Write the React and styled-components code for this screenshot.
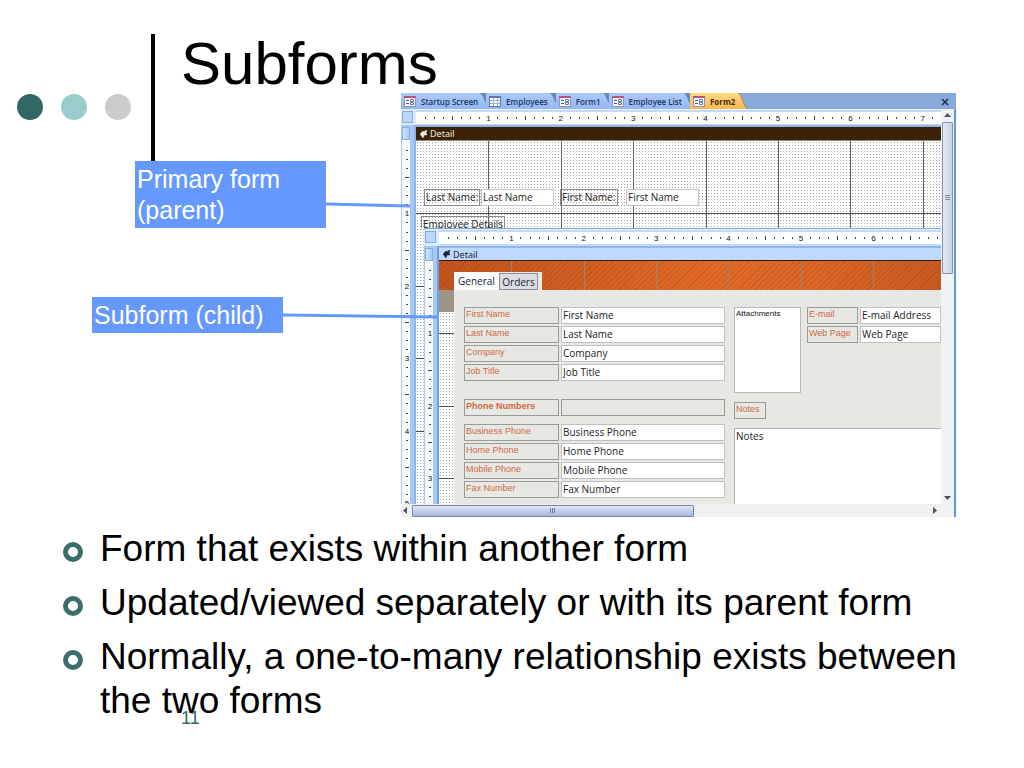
import React, { useId, useState } from "react";
import styled, { createGlobalStyle } from "styled-components";

const INCH = 72.4;

const GlobalStyle = createGlobalStyle`
  *,
  *::before {
    box-sizing: border-box;
  }

  body {
    margin: 0;
    background: #ffffff;
    color: #000000;
    font-family: "Liberation Sans", Arial, sans-serif;
  }
`;

// Slide
const Slide = styled.main`
  min-height: 100vh;
  overflow: hidden;
`;

const Stage = styled.section`
  display: grid;
  grid-template-columns: 151px 4px 246px minmax(0, 1fr);
  grid-template-rows: 59px 68px auto;
  padding: 34px 68px 0 0;
`;

const Dots = styled.div`
  grid-column: 1;
  grid-row: 1 / 3;
  display: flex;
  gap: 18px;
  padding: 60px 0 0 17px;
`;

const Dot = styled.span`
  width: 26px;
  height: 26px;
  border-radius: 50%;
  background: ${({ $color }) => $color};
`;

const Rule = styled.div`
  grid-column: 2;
  grid-row: 1 / 3;
  background: #000000;
`;

const Title = styled.h1`
  grid-column: 3 / 5;
  grid-row: 1;
  margin: 0;
  padding-left: 26px;
  font-size: 60px;
  font-weight: 400;
  line-height: 60px;
`;

const Callouts = styled.div`
  grid-column: 1 / 4;
  grid-row: 3;
  z-index: 1;
  display: flex;
  flex-direction: column;
  gap: 69px;
`;

const CalloutRow = styled.div`
  display: flex;
  padding-left: ${({ $indent }) => $indent}px;
  margin-right: -${({ $reach }) => $reach}px;
`;

const CalloutText = styled.p`
  flex: 0 0 191px;
  margin: 0;
  padding: 3px 2px 2px;
  background: #6699ff;
  color: #ffffff;
  font-size: 25px;
  line-height: 31px;
`;

const Connector = styled.svg`
  flex: 1;
  min-width: 0;
  height: 4px;
  margin-top: ${({ $drop }) => $drop}px;
  overflow: visible;
`;

const BulletList = styled.ul`
  display: flex;
  flex-direction: column;
  gap: 10px;
  margin: 0;
  padding: 10px 40px 0 63px;
  list-style: none;
`;

const Bullet = styled.li`
  display: flex;
  gap: 17px;
  font-size: 37px;
  line-height: 44px;

  &::before {
    content: "";
    flex: none;
    width: 20px;
    height: 20px;
    margin-top: 15px;
    border: 5px solid #3b6e6a;
    border-radius: 50%;
  }
`;

const PageNumber = styled.footer`
  margin-top: -15px;
  padding-left: 181px;
  color: #336666;
  font-size: 18px;
  line-height: 20px;
`;

// Database window
const Window = styled.section`
  grid-column: 4;
  grid-row: 2 / 4;
  display: flex;
  flex-direction: column;
  overflow: hidden;
  background: #f1f3f3;
  font-family: "Open Sans", "Noto Sans", sans-serif;
`;

const TabStrip = styled.div`
  display: flex;
  height: 16px;
  background: #88a9dc;
`;

const FileTab = styled.button`
  display: flex;
  align-items: center;
  gap: 5px;
  height: 16px;
  padding: 0 0 0 3px;
  border: none;
  background: ${({ $active }) =>
    $active ? "linear-gradient(#ffd983, #f9b94c)" : "linear-gradient(#abc9fa, #94b7f1)"};
  color: ${({ $active }) => ($active ? "#4a2c0c" : "#1d3562")};
  font-family: inherit;
  font-size: 8px;
  font-weight: ${({ $active }) => ($active ? 700 : 600)};
  white-space: nowrap;
  cursor: pointer;

  svg:last-child {
    margin-left: -6px;
  }
`;

const CloseButton = styled.button`
  width: 12px;
  height: 16px;
  margin: 0 5px 0 auto;
  padding: 0;
  border: none;
  background: none;
  cursor: pointer;
`;

const WorkArea = styled.div`
  display: grid;
  grid-template-columns: 15px minmax(0, 1fr) 13px;
  grid-template-rows: 16px auto 13px;
  border-right: 2px solid #6594cf;
`;

const Corner = styled.div`
  padding: 2px 3px 2px 1px;
  background: #dceafc;

  &::before {
    content: "";
    display: block;
    height: 12px;
    border: 1px solid #86aee2;
    background: #bcd7fb;
  }
`;

const TopRuler = styled.div`
  padding: 2px 0;
  background: #c3dbf8;
  border-top: 1px solid #e9f2fd;
  overflow: hidden;

  svg {
    display: block;
    width: 100%;
    height: 12px;
    background: #fdfefe;
  }
`;

const SideRuler = styled.div`
  position: relative;
  display: flex;
  flex-direction: column;
  padding: 2px 4px 0 1px;
  background: #a8c8f4;
  border-right: 2px solid ${({ $edge }) => $edge || "#8db4ec"};
  overflow: hidden;

  &::before {
    content: "";
    flex: none;
    height: 13px;
    border: 1px solid #86aee2;
    background: linear-gradient(90deg, #d3e5fc, #a9c9f5);
  }
`;

const SideScale = styled.div`
  position: relative;
  flex: 1;
  background: #f7faf8;

  svg {
    position: absolute;
    inset: 0;
    width: 100%;
    height: 100%;
  }
`;

const Canvas = styled.div`
  display: flex;
  flex-direction: column;
`;

const SectionBar = styled.div`
  display: flex;
  align-items: center;
  gap: 2px;
  height: ${({ $dark }) => ($dark ? 16 : 15)}px;
  padding-left: 4px;
  border-top: 2px solid #8fb5ea;
  border-bottom: 1px solid ${({ $dark }) => ($dark ? "#8b8680" : "#2b1a10")};
  background: ${({ $dark }) => ($dark ? "#3b2206" : "#bfd9fc")};
  color: ${({ $dark }) => ($dark ? "#f0ebe2" : "#1c2538")};
  font-family: "Noto Sans", sans-serif;
  font-size: 9px;
  line-height: 11px;
`;

const Surface = styled.div`
  position: relative;
  flex: 1;
  display: flex;
  flex-direction: column;
  background: #ffffff;
`;

const GridArt = styled.svg`
  position: absolute;
  inset: 0;
  width: 100%;
  height: 100%;
`;

const HeaderFields = styled.div`
  position: relative;
  display: flex;
  padding: 48px 0 0 8px;
  font-size: 10px;
`;

const DesignLabel = styled.label`
  width: ${({ $width }) => $width}px;
  height: 17px;
  margin-right: ${({ $gap }) => $gap}px;
  padding-left: 1px;
  border: 1px solid #8b8b8b;
  line-height: 14px;
  white-space: nowrap;
  color: #222222;
`;

const DesignInput = styled.input`
  width: 73px;
  height: 17px;
  margin-right: 6px;
  padding: 0 1px 2px;
  border: 1px solid #c4c4c4;
  background: #ffffff;
  color: #222222;
  font-family: inherit;
  font-size: 10px;
`;

const SubformCaption = styled.div`
  position: relative;
  align-self: flex-start;
  height: 12px;
  margin: 10px 0 0 5px;
  padding: 0 1px;
  border: 1px solid #8b8b8b;
  border-bottom: none;
  color: #222222;
  font-size: 10px;
  line-height: 14px;
`;

const Subform = styled.div`
  position: relative;
  display: grid;
  grid-template-columns: 15px minmax(0, 1fr);
  grid-template-rows: 17px auto;
  border-top: 1px solid #7fa9e6;
`;

const SubformFrame = styled.div`
  padding-left: 8px;
`;

const SubSurface = styled.div`
  display: grid;
  grid-template-columns: 15px minmax(0, 1fr);
  grid-template-rows: 29px auto;
`;

const Banner = styled.div`
  grid-column: 1 / 3;
  grid-row: 1;
  background:
    repeating-linear-gradient(135deg, transparent 0 3px, rgba(120, 50, 10, 0.2) 3px 4px),
    linear-gradient(90deg, #c2531c, #e26a28 55%, #dd6628 75%, #c75a22);

  svg {
    display: block;
    width: 100%;
    height: 29px;
  }
`;

const PageTabs = styled.div`
  grid-column: 2;
  grid-row: 1;
  z-index: 1;
  align-self: end;
  justify-self: start;
  display: flex;
  align-items: flex-end;
  height: 18px;
  padding-right: 4px;
  background: #e7e7e3;
`;

const PageTab = styled.button`
  width: ${({ $width }) => $width}px;
  height: ${({ $active }) => ($active ? 18 : 17)}px;
  padding: 0;
  border: ${({ $active }) => ($active ? "none" : "1px solid #8d8f9a")};
  background: ${({ $active }) => ($active ? "#fbfbfa" : "#dcdde0")};
  color: #20243a;
  font-family: inherit;
  font-size: 10px;
  line-height: 14px;
  cursor: pointer;
`;

const Gutter = styled.div`
  position: relative;
  border-top: 22px solid #9b9488;
  background: #ffffff;
  overflow: hidden;
`;

const Page = styled.div`
  display: grid;
  grid-template-columns: 261px minmax(0, 1fr);
  gap: 9px;
  padding: 17px 0 0 10px;
  background: #e7e7e3;
`;

const Column = styled.div`
  display: flex;
  flex-direction: column;
`;

const FieldGroup = styled.div`
  display: flex;
  flex-direction: column;
  gap: 2px;
  padding-bottom: ${({ $space }) => $space || 0}px;
  flex: ${({ $grow }) => ($grow ? 1 : "none")};
`;

const FieldRow = styled.div`
  display: grid;
  grid-template-columns: ${({ $label }) => $label}px minmax(0, 1fr);
  gap: 2px;
`;

const FieldLabel = styled.label`
  height: 17px;
  padding-left: 1px;
  border: 1px solid #9a9a98;
  color: #cf6a42;
  font-family: "Liberation Sans", Arial, sans-serif;
  font-size: 9px;
  font-weight: ${({ $bold }) => ($bold ? 700 : 400)};
  line-height: 12px;
  white-space: nowrap;
`;

const FieldInput = styled.input`
  width: 100%;
  height: 17px;
  padding: 0 1px 1px;
  border: 1px solid ${({ $plain }) => ($plain ? "#9a9a98" : "#c0c0be")};
  background: ${({ $plain }) => ($plain ? "#e7e7e3" : "#ffffff")};
  color: #222222;
  font-family: inherit;
  font-size: 10px;
`;

const SideTop = styled.div`
  display: flex;
  gap: 6px;
`;

const Attachments = styled.div`
  flex: 0 0 67px;
  height: 86px;
  padding-left: 1px;
  border: 1px solid #b9b9b7;
  background: #ffffff;
  color: #111111;
  font-family: "Liberation Sans", Arial, sans-serif;
  font-size: 8px;
  line-height: 11px;
`;

const NotesLabel = styled(FieldLabel)`
  align-self: flex-start;
  width: 32px;
  margin: 9px 0;
`;

const NotesBox = styled.textarea`
  flex: 1;
  width: 100%;
  min-height: 76px;
  padding: 0 1px;
  border: 1px solid #b0b0ae;
  border-width: 1px 0 0 1px;
  background: #ffffff;
  color: #222222;
  font-family: inherit;
  font-size: 10px;
  resize: none;
`;

const VerticalBar = styled.div`
  grid-column: 3;
  grid-row: 1 / 3;
  display: flex;
  flex-direction: column;
  align-items: center;
  justify-content: space-between;
  padding: 3px 1px 3px 0;
  background: #f0f2f4;
`;

const VerticalThumb = styled.div`
  display: flex;
  align-items: center;
  justify-content: center;
  width: 11px;
  height: 152px;
  margin: 3px 0 auto;
  border: 1px solid #8290ab;
  border-radius: 1px;
  background: linear-gradient(90deg, #e6eaf2, #c9d2e2);
`;

const HorizontalBar = styled.div`
  grid-column: 1 / 3;
  grid-row: 3;
  display: flex;
  align-items: center;
  justify-content: space-between;
  padding: 0 3px 0 1px;
  background: #f0f0f1;
`;

const HorizontalThumb = styled.div`
  display: flex;
  align-items: center;
  justify-content: center;
  width: 282px;
  height: 12px;
  margin: 0 auto 0 3px;
  border: 1px solid #7885a6;
  border-radius: 1px;
  background: linear-gradient(#dfe6f5, #a9b9da);
`;

const TABS = ["Startup Screen", "Employees", "Form1", "Employee List", "Form2"];

const FormIcon = () => (
  <svg width="12" height="11" viewBox="0 0 12 11" aria-hidden="true">
    <rect x="0.5" y="0.5" width="11" height="10" fill="#f4f4fb" stroke="#8b97bd" />
    <rect x="0" y="0" width="12" height="2" fill="#b4557c" />
    <path d="M2 4.5h3M2 7.5h3" stroke="#4c5f92" />
    <path d="M6.5 3.5h3v2h-3zM6.5 6.5h3v2h-3z" fill="#ffffff" stroke="#6b7ba8" />
  </svg>
);

const TableIcon = () => (
  <svg width="12" height="11" viewBox="0 0 12 11" aria-hidden="true">
    <rect x="0.5" y="0.5" width="11" height="10" fill="#ffffff" stroke="#5b78b0" />
    <rect x="0" y="0" width="12" height="2" fill="#5b78b0" />
    <path d="M4.5 2v8M8.5 2v8M1 4.5h10M1 7.5h10" stroke="#9db1d6" />
  </svg>
);

const TabEdge = ({ active }) =>
  active ? (
    <svg width="14" height="16" viewBox="0 0 14 16" aria-hidden="true">
      <path d="M4 0C8 1 9 14 14 16V0z" fill="#88a9dc" />
      <path d="M4 0C8 1 9 14 14 16" fill="none" stroke="#a98345" />
    </svg>
  ) : (
    <svg width="9" height="16" viewBox="0 0 9 16" aria-hidden="true">
      <path d="M3 0C6 2 7 8 9 10V0z" fill="#6988b8" />
    </svg>
  );

const Marker = () => (
  <svg width="8" height="8" viewBox="0 0 8 8" aria-hidden="true">
    <path d="M0 4L3 1v1l4-2-1 3 1 2H4l-1 3z" fill="currentColor" stroke="currentColor" strokeWidth="0.5" />
  </svg>
);

const Arrow = ({ points }) => (
  <svg width="7" height="7" viewBox="0 0 7 7" aria-hidden="true">
    <polygon points={points} fill="#4b5264" />
  </svg>
);

// Eight marks to the inch, the middle one longer
const Scale = ({ vertical, count, start = 0 }) => {
  const marks = Array.from({ length: count }, (_, i) => i + 1);
  return (
    <svg aria-hidden="true">
      {marks.map((i) => {
        const at = start + (i * INCH) / 8;
        if (i % 8 === 0) {
          return (
            <text
              key={i}
              x={vertical ? 5 : at}
              y={vertical ? at + 3 : 9}
              textAnchor="middle"
              fontSize="8"
              fontFamily="Liberation Sans"
              fill="#111"
            >
              {i / 8}
            </text>
          );
        }
        const half = i % 4 === 0 ? 2 : 1;
        return vertical ? (
          <rect key={i} x={5 - half} y={Math.round(at)} width={half * 2} height="1" fill="#444" />
        ) : (
          <rect key={i} x={Math.round(at)} y={6 - half} width="1" height={half * 2} fill="#444" />
        );
      })}
    </svg>
  );
};

const DotGrid = ({ columns = 0, rows = 0, start = 0 }) => {
  const id = useId();
  return (
    <GridArt aria-hidden="true">
      <defs>
        <pattern id={id} width="3" height="3" patternUnits="userSpaceOnUse">
          <rect x="1" y="1" width="1" height="1" fill="#a5a5a5" />
        </pattern>
      </defs>
      <rect width="100%" height="100%" fill={`url(#${id})`} />
      {Array.from({ length: columns }, (_, i) => (
        <rect key={i} x={Math.round((i + 1) * INCH)} y="0" width="1" height="100%" fill="#606060" />
      ))}
      {Array.from({ length: rows }, (_, i) => (
        <rect key={i} x="0" y={Math.round(start + (i + 1) * INCH)} width="100%" height="1" fill="#505050" />
      ))}
    </GridArt>
  );
};

const Field = ({ name, value = name, label = 95, bold, plain }) => {
  const id = useId();
  return (
    <FieldRow $label={label}>
      <FieldLabel htmlFor={id} $bold={bold}>
        {name}
      </FieldLabel>
      <FieldInput id={id} defaultValue={value} $plain={plain} />
    </FieldRow>
  );
};

const Callout = ({ children, indent, reach, drop }) => (
  <CalloutRow $indent={indent} $reach={reach}>
    <CalloutText>{children}</CalloutText>
    <Connector $drop={drop} viewBox="0 0 100 4" preserveAspectRatio="none" aria-hidden="true">
      <line x1="0" y1="1" x2="100" y2="3" stroke="#6699ff" strokeWidth="3" vectorEffect="non-scaling-stroke" />
    </Connector>
  </CalloutRow>
);

const SubformView = () => {
  const [page, setPage] = useState("General");
  return (
    <SubformFrame>
      <Subform>
        <Corner />
        <TopRuler>
          <Scale count={55} />
        </TopRuler>
        <SideRuler $edge="#6f9fe0">
          <SideScale>
            <Scale vertical count={26} />
          </SideScale>
        </SideRuler>
        <Canvas>
          <SectionBar>
            <Marker />
            Detail
          </SectionBar>
          <SubSurface>
            <Banner>
              <svg aria-hidden="true">
                {[1, 2, 3, 4, 5, 6].map((i) => (
                  <rect key={i} x={Math.round(i * INCH)} y="0" width="1" height="29" fill="#a08468" />
                ))}
              </svg>
            </Banner>
            <PageTabs>
              {[["General", 45], ["Orders", 39]].map(([name, width]) => (
                <PageTab key={name} $width={width} $active={page === name} onClick={() => setPage(name)}>
                  {name}
                </PageTab>
              ))}
            </PageTabs>
            <Gutter>
              <DotGrid rows={3} start={-51} />
            </Gutter>
            <Page>
              <Column>
                <FieldGroup $space={18}>
                  <Field name="First Name" />
                  <Field name="Last Name" />
                  <Field name="Company" />
                  <Field name="Job Title" />
                </FieldGroup>
                <FieldGroup $space={8}>
                  <Field name="Phone Numbers" value="" bold plain />
                </FieldGroup>
                <FieldGroup $space={6}>
                  <Field name="Business Phone" />
                  <Field name="Home Phone" />
                  <Field name="Mobile Phone" />
                  <Field name="Fax Number" />
                </FieldGroup>
              </Column>
              <Column>
                <SideTop>
                  <Attachments>Attachments</Attachments>
                  <FieldGroup $grow>
                    <Field name="E-mail" value="E-mail Address" label={51} />
                    <Field name="Web Page" label={51} />
                  </FieldGroup>
                </SideTop>
                <NotesLabel htmlFor="notes">Notes</NotesLabel>
                <NotesBox id="notes" defaultValue="Notes" />
              </Column>
            </Page>
          </SubSurface>
        </Canvas>
      </Subform>
    </SubformFrame>
  );
};

const DatabaseWindow = () => {
  const [active, setActive] = useState("Form2");
  return (
    <Window>
      <TabStrip>
        {TABS.map((tab) => (
          <FileTab key={tab} $active={tab === active} onClick={() => setActive(tab)}>
            {tab === "Employees" ? <TableIcon /> : <FormIcon />}
            {tab}
            <TabEdge active={tab === active} />
          </FileTab>
        ))}
        <CloseButton aria-label="Close">
          <svg width="8" height="8" viewBox="0 0 8 8" aria-hidden="true">
            <path d="M1 1l6 6M7 1L1 7" stroke="#1a2438" strokeWidth="1.4" />
          </svg>
        </CloseButton>
      </TabStrip>
      <WorkArea>
        <Corner />
        <TopRuler>
          <Scale count={57} />
        </TopRuler>
        <SideRuler>
          <SideScale>
            <Scale vertical count={40} start={1} />
          </SideScale>
        </SideRuler>
        <Canvas>
          <SectionBar $dark>
            <Marker />
            Detail
          </SectionBar>
          <Surface>
            <DotGrid columns={7} rows={4} />
            <HeaderFields>
              <DesignLabel htmlFor="last" $width={56} $gap={1}>
                Last Name:
              </DesignLabel>
              <DesignInput id="last" defaultValue="Last Name" />
              <DesignLabel htmlFor="first" $width={58} $gap={8}>
                First Name:
              </DesignLabel>
              <DesignInput id="first" defaultValue="First Name" />
            </HeaderFields>
            <SubformCaption>Employee Details</SubformCaption>
            <SubformView />
          </Surface>
        </Canvas>
        <VerticalBar>
          <Arrow points="0,5 3.5,1 7,5" />
          <VerticalThumb>
            <svg width="5" height="6" viewBox="0 0 5 6" aria-hidden="true">
              <path d="M0 .5h5M0 2.5h5M0 4.5h5" stroke="#7f8aa3" />
            </svg>
          </VerticalThumb>
          <Arrow points="0,2 3.5,6 7,2" />
        </VerticalBar>
        <HorizontalBar>
          <Arrow points="5,0 1,3.5 5,7" />
          <HorizontalThumb>
            <svg width="6" height="5" viewBox="0 0 6 5" aria-hidden="true">
              <path d="M.5 0v5M2.5 0v5M4.5 0v5" stroke="#6a7694" />
            </svg>
          </HorizontalThumb>
          <Arrow points="2,0 6,3.5 2,7" />
        </HorizontalBar>
      </WorkArea>
    </Window>
  );
};

const App = () => (
  <>
    <GlobalStyle />
    <Slide>
      <Stage>
        <Dots>
          <Dot $color="#336666" />
          <Dot $color="#99cccc" />
          <Dot $color="#cccccc" />
        </Dots>
        <Rule />
        <Title>Subforms</Title>
        <Callouts>
          <Callout indent={135} reach={9} drop={42}>
            Primary form (parent)
          </Callout>
          <Callout indent={92} reach={36} drop={17}>
            Subform (child)
          </Callout>
        </Callouts>
        <DatabaseWindow />
      </Stage>
      <BulletList>
        <Bullet>Form that exists within another form</Bullet>
        <Bullet>Updated/viewed separately or with its parent form</Bullet>
        <Bullet>Normally, a one-to-many relationship exists between the two forms</Bullet>
      </BulletList>
      <PageNumber>11</PageNumber>
    </Slide>
  </>
);

export default App;
